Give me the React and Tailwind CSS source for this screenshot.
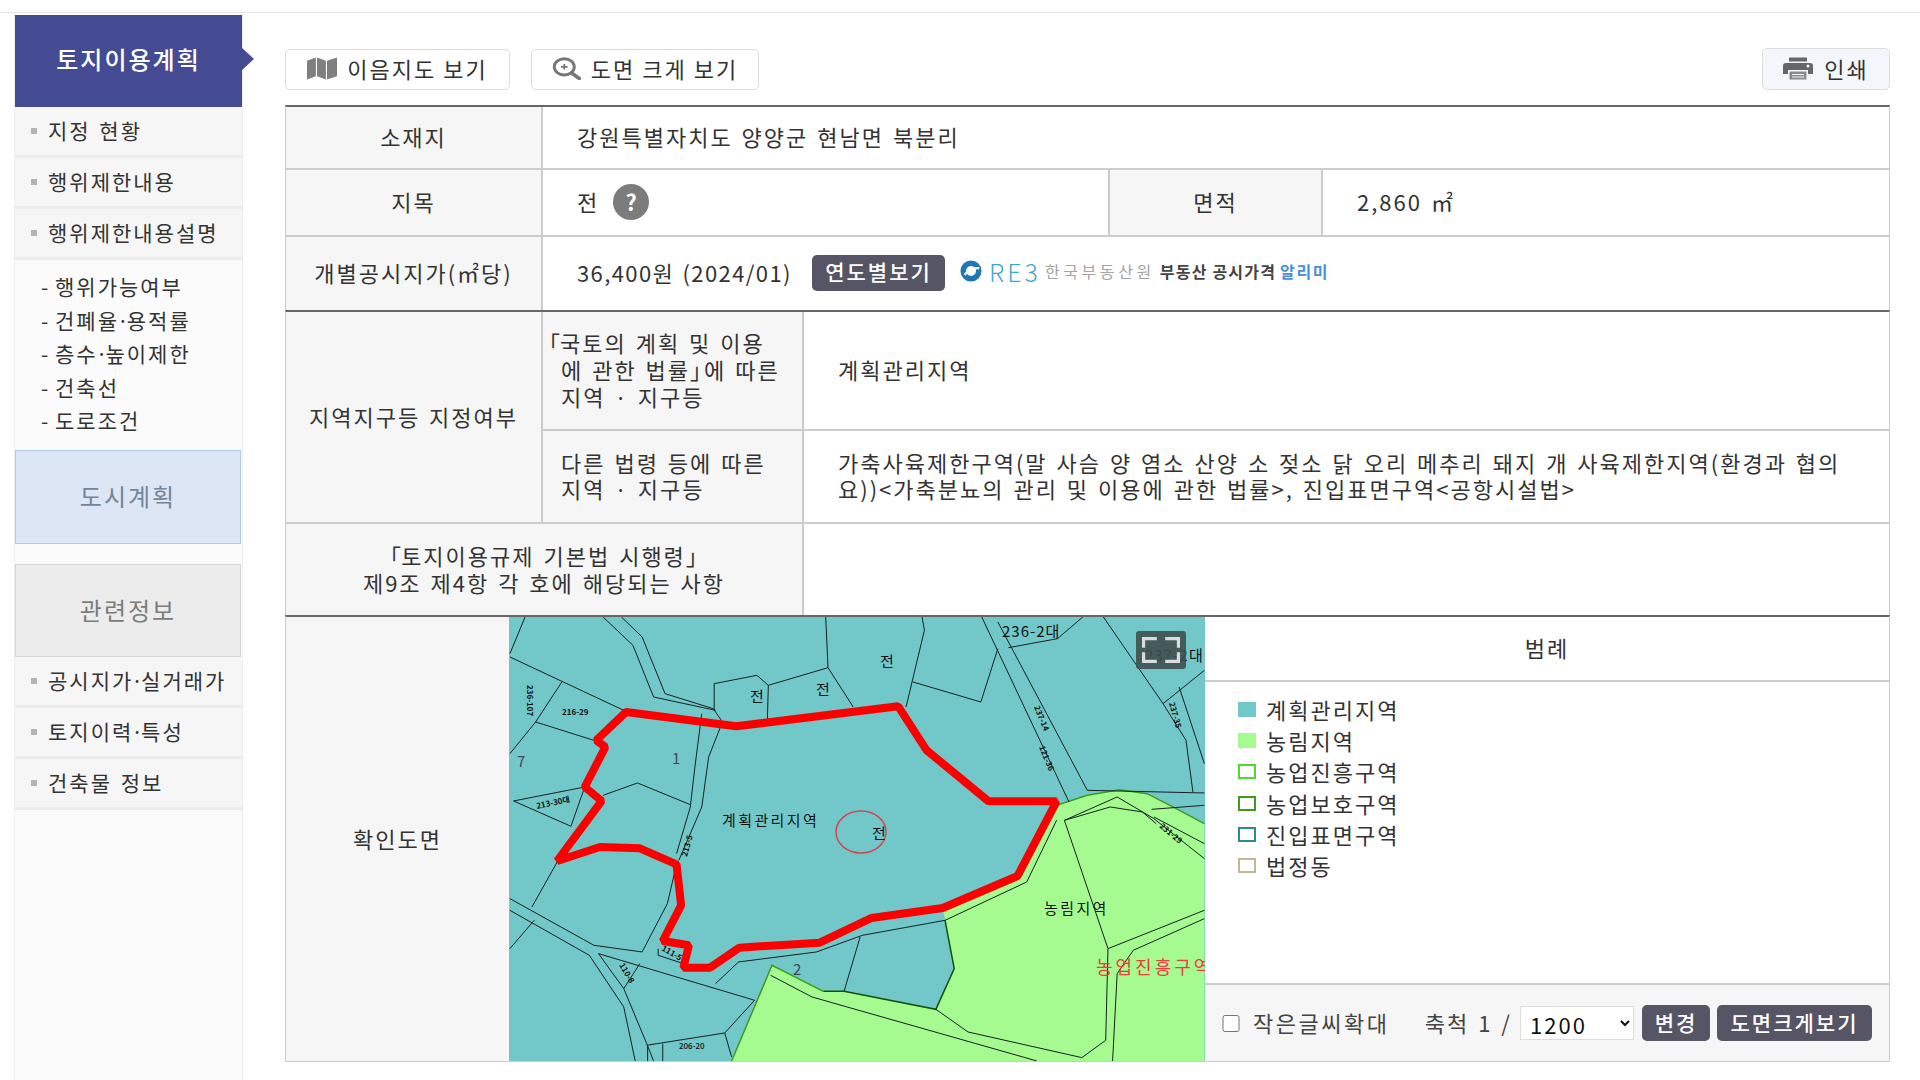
import React from "react";

const sideTop = ["지정 현황", "행위제한내용", "행위제한내용설명"];
const sideSub = ["행위가능여부", "건폐율·용적률", "층수·높이제한", "건축선", "도로조건"];
const sideBottom = ["공시지가·실거래가", "토지이력·특성", "건축물 정보"];

const legend = [
  { label: "계획관리지역", cls: "bg-[#72c8c8]" },
  { label: "농림지역", cls: "bg-[#a5fb8f]" },
  { label: "농업진흥구역", cls: "border-2 border-[#55d633]" },
  { label: "농업보호구역", cls: "border-2 border-[#3f9a1f]" },
  { label: "진입표면구역", cls: "border-2 border-[#2f8a8a]" },
  { label: "법정동", cls: "border-2 border-[#c4b596]" },
];

// parcel lines, in the coordinates of a 3x crop of the map
const parcels = [
  "55,20 22,130",
  "22,140 270,300",
  "135,215 78,335 205,390",
  "78,335 22,430",
  "225,20 290,105 335,260 470,300",
  "265,20 310,80 360,250 465,295 485,335 455,440 440,590 390,750",
  "440,310 425,470 415,590 385,730",
  "467,300 467,220 560,195 585,225 583,325",
  "585,225 715,172 770,290",
  "710,20 715,172",
  "920,20 925,60 885,290",
  "900,215 1048,275 1085,115",
  "1050,20 1240,575",
  "1085,35 1280,540 1535,548",
  "1108,112 1215,85 1270,20",
  "1315,20 1445,280 1495,390 1510,545",
  "1445,280 1535,180",
  "1480,230 1535,460",
  "185,530 30,572 155,648 185,530",
  "225,555 300,518 415,583",
  "125,755 70,890",
  "22,865 205,1005 310,1025 365,880 385,762",
  "22,900 195,1035 270,1190 295,1352",
  "215,1030 555,1170",
  "215,1030 270,1135 305,1060",
  "270,1135 320,1300 335,1352",
  "75,930 22,1015",
  "320,1305 490,1268 505,1340",
  "490,1268 555,1170",
  "322,1305 322,1352",
  "355,1300 355,1352",
  "470,1120 520,1055 690,1025 790,975 970,930",
  "345,1015 345,1035 400,1060",
  "785,980 750,1143",
  "970,930 1148,815 1213,630",
  "1230,630 1345,560 1425,625 1535,745",
  "1230,630 1330,590 1400,605 1430,640",
  "1230,630 1325,1015 1535,900",
  "1325,1015 1320,1290 1268,1342 1020,1265 950,1197",
  "1535,925 1380,1020 1345,1090 1335,1352",
  "590,1095 680,1160 1170,1352",
  "1420,597 1535,585",
  "1425,620 1535,700",
];

const greenArea =
  "1213,585 1280,555 1350,538 1410,550 1460,585 1535,640 1535,1352 505,1352 593,1065 705,1143 750,1143 950,1197 990,1075 970,930 965,893 1128,797";
const redLine =
  "275,305 515,348 868,288 930,420 1065,573 1213,573 1128,797 965,893 810,923 697,997 522,1012 458,1072 400,1072 412,1005 355,992 395,885 385,762 305,714 218,710 125,752 222,572 185,530 230,410 210,390 275,305";

const MapDrawing = () => (
  <svg viewBox="0 0 696 444" className="block w-full h-full bg-[#72c8c8]" style={{ letterSpacing: 0, wordSpacing: 0 }}>
    <g transform="scale(0.459 0.3333) translate(-20 -20)">
      <polygon points={greenArea} fill="#a5fb8f" />
      <polyline points="1213,585 1280,555 1350,538 1410,550 1460,585 1535,640" fill="none" stroke="#3f9a1f" strokeWidth="1.5" vectorEffect="non-scaling-stroke" />
      <polyline points="505,1352 593,1065 705,1143" fill="none" stroke="#3f9a1f" strokeWidth="1.5" vectorEffect="non-scaling-stroke" />
      <polyline points="705,1143 750,1143 950,1197 990,1075 970,930" fill="none" stroke="#14500a" strokeWidth="1.5" vectorEffect="non-scaling-stroke" />
      {parcels.map((p) => (
        <polyline key={p} points={p} fill="none" stroke="#14201f" strokeWidth="1" vectorEffect="non-scaling-stroke" />
      ))}
      <polygon points={redLine} fill="none" stroke="#fb0000" strokeWidth="8" strokeLinejoin="bevel" vectorEffect="non-scaling-stroke" />
    </g>
    <ellipse cx="352" cy="215" rx="25" ry="21" fill="none" stroke="#d6454f" strokeWidth="1.5" />
    <g fill="#111" fontSize="15">
      <text x="213" y="209" letterSpacing="2.4">계획관리지역</text>
      <text x="363" y="222">전</text>
      <text x="535" y="297" letterSpacing="2.4">농림지역</text>
      <text x="371" y="50">전</text>
      <text x="241" y="85">전</text>
      <text x="307" y="78">전</text>
      <text x="163" y="147" fill="#445">1</text>
      <text x="8" y="150" fill="#445">7</text>
      <text x="284" y="358" fill="#445">2</text>
      <text x="493" y="20" letterSpacing="1">236-2대</text>
      <text x="636" y="44" letterSpacing="1">237-2</text>
      <text x="680" y="44">대</text>
    </g>
    <text x="587" y="357" fontSize="18" letterSpacing="3" fill="#f43a3a">농업진흥구역</text>
    <g fill="#111" fontSize="8" fontWeight="700">
      <text x="53" y="98">216-29</text>
      <text x="28" y="192" transform="rotate(-12 28 192)">213-30대</text>
      <text x="18" y="68" transform="rotate(90 18 68)">236-107</text>
      <text x="170" y="432" fontWeight="500">206-20</text>
      <text x="525" y="90" transform="rotate(68 525 90)">237-14</text>
      <text x="530" y="130" transform="rotate(68 530 130)">121-36</text>
      <text x="660" y="86" transform="rotate(75 660 86)">237-35</text>
      <text x="178" y="240" transform="rotate(-75 178 240)">213-5</text>
      <text x="650" y="210" transform="rotate(40 650 210)">231-29</text>
      <text x="152" y="333" transform="rotate(30 152 333)">111-5</text>
      <text x="110" y="348" transform="rotate(60 110 348)">110-8</text>
    </g>
  </svg>
);

const MapIcon = () => (
  <svg viewBox="0 0 27 20" className="w-[30px] h-[23px] shrink-0" fill="#7f7f7f">
    <polygon points="0,3 8,0 8,17 0,20" />
    <polygon points="9,0 17,3 17,20 9,17" />
    <polygon points="18,3 27,0 27,17 18,20" />
  </svg>
);

const ZoomIcon = () => (
  <svg viewBox="0 0 26 20" className="w-[29px] h-[23px] shrink-0" fill="none" stroke="#777">
    <ellipse cx="11" cy="8.5" rx="9" ry="7.3" strokeWidth="2.6" />
    <path d="M8 8.5H14M11 6V11" strokeWidth="1.6" />
    <path d="M17.5 14L24.5 19" strokeWidth="3.2" strokeLinecap="round" />
  </svg>
);

const PrintIcon = () => (
  <svg viewBox="0 0 30 24" className="w-[30px] h-[24px] shrink-0">
    <path d="M6 5.5V1.5H24V5.5Z" fill="#666" />
    <path d="M3 7H27Q30 7 30 10V18H25V14H5V18H0V10Q0 7 3 7Z" fill="#666" />
    <circle cx="25" cy="10" r="1.5" fill="#f3f7fc" />
    <path d="M6.5 15.5H23.5V23.5H6.5Z" fill="#8a8a8a" />
    <path d="M9 18.5H21M9 21H21" stroke="#f3f7fc" strokeWidth="1" />
  </svg>
);

// the middle dot sits tight against its neighbours in the reference
const Dotted = ({ text }) =>
  text.split("·").map((part, i) => (
    <React.Fragment key={part}>
      {i > 0 && <span className="tracking-normal -mx-[2px]">·</span>}
      {part}
    </React.Fragment>
  ));

const Bullet = () => <span className="w-[6px] h-[6px] bg-[#b4b4b4] shrink-0" />;

const SideItem = ({ label }) => (
  <div className="h-[51px] flex items-center gap-[11px] pl-[16px] bg-[#f6f6f6] border-b-[3px] border-[#ececec] text-[21px] text-[#333] whitespace-nowrap">
    <Bullet />
    <span><Dotted text={label} /></span>
  </div>
);

const Sidebar = () => (
  <aside className="w-[229px] shrink-0 border-x border-[#eeeeee] bg-[#fbfbfb] h-[1065px] relative">
    <div className="h-[92px] bg-[#454b92] text-white text-[24px] font-medium flex items-center justify-center pb-[4px]">
      토지이용계획
    </div>
    <span className="absolute left-[226px] top-[32px] border-y-[12px] border-y-transparent border-l-[13px] border-l-[#454b92]" />
    {sideTop.map((s) => <SideItem key={s} label={s} />)}
    <ul className="pt-[10px] pl-[26px] text-[21px] text-[#333] h-[190px]">
      {sideSub.map((s) => (
        <li key={s} className="h-[33.5px] leading-[33.5px] whitespace-nowrap flex">
          <span className="w-[14px]">-</span>
          <span><Dotted text={s} /></span>
        </li>
      ))}
    </ul>
    <div className="h-[94px] bg-[#dce6f4] border border-[#b0cbea] text-[#74859b] text-[24px] flex items-center justify-center mr-[1px] pb-[2px]">도시계획</div>
    <div className="h-[20px]" />
    <div className="h-[93px] bg-[#ececec] border border-[#d5d5d5] text-[#7c7c7c] text-[24px] flex items-center justify-center mr-[1px] pb-[2px]">관련정보</div>
    {sideBottom.map((s) => <SideItem key={s} label={s} />)}
  </aside>
);

const Th = ({ className = "", children }) => (
  <div className={"bg-[#f6f6f6] flex items-center justify-center text-center text-[#333] shrink-0 pb-[2px] " + className}>{children}</div>
);

// CJK corner brackets: the ink sits on the inner half of the glyph box
const Open = () => <span className="-ml-[9px] tracking-normal">「</span>;
const Close = () => <span className="-mr-[10px]">」</span>;

const darkBtn = "bg-[#555566] text-white text-[21px] font-medium rounded-[5px] flex items-center justify-center whitespace-nowrap shrink-0 pb-[1px]";
const lightBtn = "h-[41px] border border-[#dddddd] rounded-[5px] flex items-center justify-center whitespace-nowrap pb-[2px]";

export default function App() {
  return (
    <div className="relative w-[1920px] h-[1080px] overflow-hidden bg-white text-[22px] tracking-[2px] [word-spacing:2px] text-[#333] pt-[15px] pl-[14px] pr-[30px]" style={{ fontFamily: "'Noto Sans CJK KR', 'Noto Sans', sans-serif" }}>
      <div className="absolute left-0 top-[12px] w-full h-[1px] bg-[#e8e8e8]" />
      <div className="flex gap-[42px]">
        <Sidebar />
        <main className="flex-1 pt-[33px]">
          <div className="flex items-center h-[42px] gap-[21px]">
            <button className={lightBtn + " w-[225px] gap-[10px] bg-white"}>
              <MapIcon />이음지도 보기
            </button>
            <button className={lightBtn + " w-[228px] gap-[10px] bg-white"}>
              <ZoomIcon />도면 크게 보기
            </button>
            <button className={lightBtn + " ml-auto w-[128px] h-[42px] gap-[11px] bg-[#f3f7fc]"}>
              <PrintIcon />인쇄
            </button>
          </div>

          <div className="mt-[15px] border-t-2 border-[#666] border-x border-x-[#cccccc]">
            <div className="flex h-[63px] border-b-2 border-[#cccccc]">
              <Th className="w-[257px] border-r-2 border-[#cccccc]">소재지</Th>
              <div className="flex-1 flex items-center pl-[34px] pb-[2px]">강원특별자치도 양양군 현남면 북분리</div>
            </div>
            <div className="flex h-[67px] border-b-2 border-[#cccccc]">
              <Th className="w-[257px] border-r-2 border-[#cccccc]">지목</Th>
              <div className="w-[565px] flex items-center pl-[34px] gap-[14px] pb-[2px]">
                전
                <span className="w-[36px] h-[36px] rounded-full bg-[#7c7c7c] text-white font-bold tracking-normal flex items-center justify-center">?</span>
              </div>
              <Th className="w-[215px] border-x-2 border-[#cccccc]">면적</Th>
              <div className="flex-1 flex items-center pl-[34px] pb-[2px]">2,860 ㎡</div>
            </div>
            <div className="flex h-[73px]">
              <Th className="w-[257px] border-r-2 border-[#cccccc] whitespace-nowrap">개별공시지가(㎡당)</Th>
              <div className="flex-1 flex items-center pl-[34px] pb-[2px] whitespace-nowrap">
                <span className="w-[235px] shrink-0 tracking-[1.4px]">36,400원 (2024/01)</span>
                <span className={darkBtn + " w-[133px] h-[36px]"}>연도별보기</span>
                <span className="ml-[15px] flex items-center text-[16px] tracking-[1.2px] [word-spacing:0px] pb-[3px]">
                  <svg viewBox="0 0 24 24" className="w-[22px] h-[22px] shrink-0">
                    <circle cx="12" cy="12" r="8.5" fill="none" stroke="#1f78b4" strokeWidth="6" />
                    <path d="M5 16 Q12 8 21 9" fill="none" stroke="#fff" strokeWidth="2.5" />
                  </svg>
                  <span className="ml-[7px] text-[25px] leading-none tracking-[3px] font-light text-[#45a4d4]">RE3</span>
                  <span className="ml-[4px] text-[16px] tracking-[3.6px] text-[#a3a3a3]">한국부동산원</span>
                  <span className="ml-[5px] font-bold text-[#444]">부동산 공시가격</span>
                  <span className="ml-[4px] font-bold tracking-[1.6px] text-[#4a90d9]">알리미</span>
                </span>
              </div>
            </div>
          </div>

          <div className="border-t-2 border-[#666] border-x border-x-[#cccccc]">
            <div className="flex h-[212px] border-b-2 border-[#cccccc]">
              <Th className="w-[257px] border-r-2 border-[#cccccc] whitespace-nowrap">지역지구등 지정여부</Th>
              <div className="flex-1 flex flex-col">
                <div className="flex h-[119px] border-b-2 border-[#cccccc]">
                  <div className="w-[261px] shrink-0 bg-[#f6f6f6] border-r-2 border-[#cccccc] flex items-center pl-[4px] pb-[2px] leading-[27px] whitespace-nowrap">
                    <span><Open />국토의 계획 및 이용<br /><span className="pl-[14px]">에 관한 법률<Close />에 따른</span><br /><span className="pl-[14px]">지역 · 지구등</span></span>
                  </div>
                  <div className="flex-1 flex items-center pl-[34px] pb-[2px]">계획관리지역</div>
                </div>
                <div className="flex flex-1">
                  <div className="w-[261px] shrink-0 bg-[#f6f6f6] border-r-2 border-[#cccccc] flex items-center pl-[18px] pb-[3px] leading-[26px] whitespace-nowrap">
                    <span>다른 법령 등에 따른<br />지역 · 지구등</span>
                  </div>
                  <div className="flex-1 flex items-center pl-[34px] pb-[3px] leading-[26px] whitespace-nowrap">
                    <span>가축사육제한구역(말 사슴 양 염소 산양 소 젖소 닭 오리 메추리 돼지 개 사육제한지역(환경과 협의<br />요))&lt;가축분뇨의 관리 및 이용에 관한 법률&gt;, 진입표면구역&lt;공항시설법&gt;</span>
                  </div>
                </div>
              </div>
            </div>
            <div className="flex h-[91px]">
              <Th className="w-[518px] border-r-2 border-[#cccccc] leading-[27px] whitespace-nowrap">
                <span><Open />토지이용규제 기본법 시행령<Close /><br />제9조 제4항 각 호에 해당되는 사항</span>
              </Th>
              <div className="flex-1" />
            </div>
          </div>

          <div className="flex h-[447px] border-t-2 border-[#666] border-x border-x-[#cccccc] border-b border-b-[#cccccc]">
            <Th className="w-[223px]">확인도면</Th>
            <div className="w-[696px] h-[444px] relative shrink-0">
              <MapDrawing />
              <div className="absolute left-[627px] top-[14px] w-[50px] h-[38px] bg-[#3f4f4f]/90 rounded-[3px] p-[6px]">
                <svg viewBox="0 0 36 24" className="w-full h-full" fill="none" stroke="#d8dcdc" strokeWidth="3" preserveAspectRatio="none">
                  <path d="M1.5 10V1.5H14M22 1.5H34.5V10M34.5 14V22.5H22M14 22.5H1.5V14" />
                </svg>
              </div>
            </div>
            <div className="flex-1 flex flex-col min-w-0">
              <div className="h-[65px] flex items-center justify-center border-b-2 border-[#cccccc] pb-[2px]">범례</div>
              <ul className="flex-1 pt-[12px] pl-[33px]">
                {legend.map((l) => (
                  <li key={l.label} className="h-[31.2px] flex items-center gap-[10px] whitespace-nowrap">
                    <span className={"w-[18px] h-[15px] " + l.cls} />
                    {l.label}
                  </li>
                ))}
              </ul>
              <div className="h-[78px] bg-[#f6f6f6] border-t-2 border-[#cccccc] flex items-center pl-[17px] pr-[17px] whitespace-nowrap">
                <input type="checkbox" className="w-[18px] h-[17px]" />
                <span className="ml-[13px] text-[#444] pb-[2px] tracking-[2.5px]">작은글씨확대</span>
                <span className="ml-auto text-[#444] pb-[2px]">축척 1 /</span>
                <select className="ml-[8px] w-[114px] h-[34px] bg-white border border-[#dddddd] pl-[5px] text-[#111]">
                  <option>1200</option>
                </select>
                <span className={darkBtn + " ml-[8px] w-[68px] h-[36px]"}>변경</span>
                <span className={darkBtn + " ml-[7px] w-[155px] h-[36px]"}>도면크게보기</span>
              </div>
            </div>
          </div>
        </main>
      </div>
    </div>
  );
}
